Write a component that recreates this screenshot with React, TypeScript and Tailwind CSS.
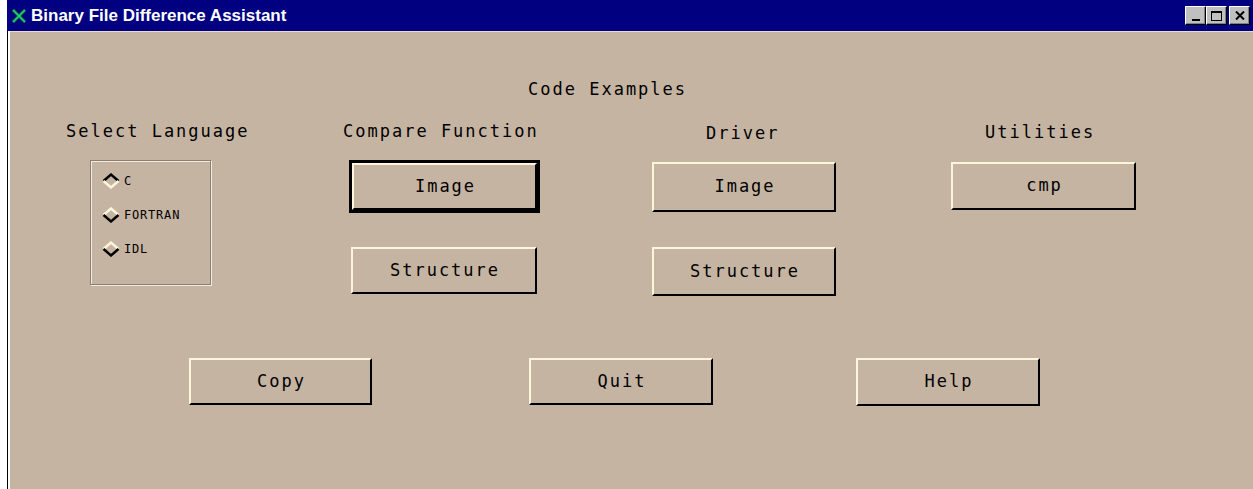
import React from "react";

const mono = { fontFamily: '"DejaVu Sans Mono", "Liberation Mono", monospace' };

const MotifButton = ({
  label,
  className = "",
}: {
  label: string;
  className?: string;
}) => {
  return (
    <div
      className={`flex items-center justify-center border-2 border-t-[#fff4dc] border-l-[#fff4dc] border-b-black border-r-black bg-[#c5b4a2] pl-[2px] text-[17px] tracking-[2px] text-black ${className}`}
      style={mono}
    >
      {label}
    </div>
  );
};

const Diamond = ({ selected }: { selected: boolean }) => {
  const top = selected ? "#000000" : "#fff4dc";
  const bottom = selected ? "#fff4dc" : "#000000";
  return (
    <svg width="18" height="16" viewBox="0 0 18 16">
      <polyline points="1.5,8 9,1.5 16.5,8" fill="none" stroke={top} strokeWidth="2.4" />
      <polyline points="1.5,8 9,14.5 16.5,8" fill="none" stroke={bottom} strokeWidth="2.4" />
    </svg>
  );
};

const TitleButton = ({ children }: { children: React.ReactNode }) => (
  <div className="flex h-[19px] w-[21px] items-center justify-center border border-t-white border-l-white border-b-black border-r-black bg-[#c0c0c0] shadow-[inset_-1px_-1px_0_#808080]">
    {children}
  </div>
);

export default function App() {
  const languages = ["C", "FORTRAN", "IDL"];

  return (
    <div className="h-[489px] w-[1253px] overflow-hidden bg-white">
      <div className="ml-[7px] flex h-full flex-col">
        {/* title bar */}
        <div className="flex h-[31px] items-center bg-[#000080] pl-[5px] pr-[3px]">
          <svg width="14" height="14" viewBox="0 0 14 14" className="mr-[5px]">
            <path d="M1 1 L13 13 M13 1 L1 13" stroke="#0a8a3a" strokeWidth="3" />
            <path d="M1 1 L13 13 M13 1 L1 13" stroke="#2fd07a" strokeWidth="1.2" />
          </svg>
          <span
            className="text-[17px] font-bold leading-none text-white"
            style={{ fontFamily: '"Liberation Sans", Arial, sans-serif' }}
          >
            Binary File Difference Assistant
          </span>
          <div className="ml-auto flex items-center">
            <TitleButton>
              <div className="mt-[9px] h-[2px] w-[8px] bg-black" />
            </TitleButton>
            <TitleButton>
              <div className="h-[10px] w-[11px] border border-t-2 border-black" />
            </TitleButton>
            <div className="w-[2px]" />
            <TitleButton>
              <svg width="10" height="9" viewBox="0 0 10 9">
                <path d="M1 0.5 L9 8.5 M9 0.5 L1 8.5" stroke="black" strokeWidth="2" />
              </svg>
            </TitleButton>
          </div>
        </div>

        {/* client area */}
        <div className="flex-1 border-l border-l-black bg-white pl-[2px]">
          <div className="h-full border-t border-[#e9dccb] bg-[#c5b4a2] text-black" style={mono}>
            <div className="pl-[518px] pt-[47px] text-[17px] leading-[20px] tracking-[2px]">
              Code Examples
            </div>

            <div className="mt-[22px] flex">
              {/* select language */}
              <div className="flex w-[333px] flex-col items-start">
                <div className="ml-[56px] h-[20px] text-[17px] leading-[20px] tracking-[2px]">
                  Select Language
                </div>
                <div className="ml-[80px] mt-[19px] flex h-[125px] w-[121px] flex-col border border-[#8c8070] pl-[11px] pt-[12px] shadow-[inset_1px_1px_0_#f6eadb,1px_1px_0_#f6eadb]">
                  {languages.map((lang, i) => (
                    <div key={lang} className="flex h-[34px] items-start gap-[4px]">
                      <Diamond selected={i === 0} />
                      <span className="text-[12px] leading-[16px] tracking-[0.8px]">{lang}</span>
                    </div>
                  ))}
                </div>
              </div>

              {/* compare function */}
              <div className="flex w-[309px] flex-col items-start">
                <div className="h-[20px] text-[17px] leading-[20px] tracking-[2px]">
                  Compare Function
                </div>
                <div className="ml-[6px] mt-[19px] border-[3px] border-black">
                  <MotifButton label="Image" className="h-[47px] w-[185px]" />
                </div>
                <MotifButton label="Structure" className="ml-[8px] mt-[34px] h-[47px] w-[186px]" />
              </div>

              {/* driver */}
              <div className="flex w-[299px] flex-col items-start">
                <div className="ml-[54px] mt-[2px] h-[20px] text-[17px] leading-[20px] tracking-[2px]">
                  Driver
                </div>
                <MotifButton label="Image" className="mt-[19px] h-[50px] w-[184px]" />
                <MotifButton label="Structure" className="mt-[35px] h-[49px] w-[184px]" />
              </div>

              {/* utilities */}
              <div className="flex flex-col items-start">
                <div className="ml-[34px] mt-[1px] h-[20px] text-[17px] leading-[20px] tracking-[2px]">
                  Utilities
                </div>
                <MotifButton label="cmp" className="mt-[20px] h-[48px] w-[185px]" />
              </div>
            </div>

            <div className="mt-[62px] flex">
              <MotifButton label="Copy" className="ml-[179px] h-[47px] w-[183px]" />
              <MotifButton label="Quit" className="ml-[157px] h-[47px] w-[184px]" />
              <MotifButton label="Help" className="ml-[143px] h-[48px] w-[184px]" />
            </div>
          </div>
        </div>
      </div>
    </div>
  );
}
